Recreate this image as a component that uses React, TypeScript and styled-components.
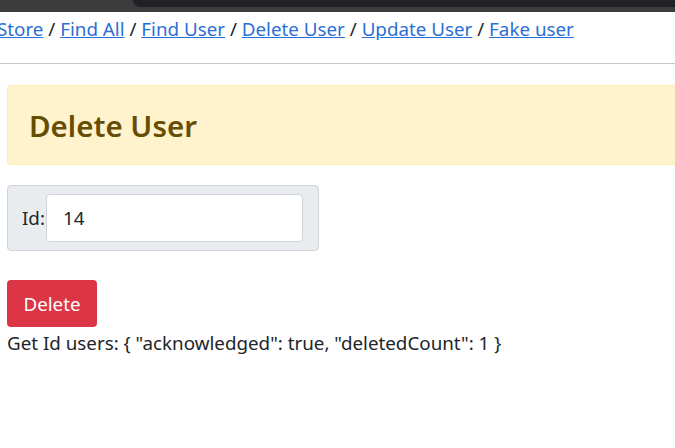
import React from "react";
import styled, { createGlobalStyle } from "styled-components";

const GlobalStyle = createGlobalStyle`
  html, body {
    margin: 0;
    padding: 0;
    background: #fff;
    font-family: "Noto Sans", "Open Sans", sans-serif;
    font-size: 18.8px;
    color: #212529;
  }
  * { box-sizing: border-box; }
`;

const Chrome = styled.div`
  display: flex;
  height: 12px;
  background: #3c3c3c;
`;

const ChromeSide = styled.div`
  width: 133px;
`;

const ChromeTab = styled.div`
  flex: 1;
  height: 7px;
  background: #202124;
  border-bottom-left-radius: 7px;
`;

const Nav = styled.nav`
  padding: 4px 0 0 0;
  margin-left: -3px;
  height: 52px;
  line-height: 26px;
  border-bottom: 1px solid #c8c8c8;
  white-space: nowrap;
  a {
    color: #2a6fd6;
    text-decoration: underline;
  }
`;

const Page = styled.main`
  padding: 21px 0 0 7px;
`;

const Alert = styled.div`
  background: #fff3cd;
  border: 1px solid #ffecb5;
  border-right: none;
  border-radius: 4px 0 0 4px;
  height: 80px;
  padding: 0 21px;
  display: flex;
  align-items: center;
  margin-bottom: 20px;
`;

const Heading = styled.h2`
  margin: 0;
  font-size: 29.5px;
  font-weight: 600;
  color: #664d03;
`;

const FormBox = styled.div`
  width: 312px;
  height: 66px;
  background: #e9ecef;
  border: 1px solid #ced4da;
  border-radius: 4px;
  display: flex;
  align-items: center;
  padding: 0 15px 0 14px;
  margin-bottom: 29px;
`;

const Label = styled.label`
  margin-right: 1px;
`;

const Input = styled.input`
  flex: 1;
  min-width: 0;
  width: 0;
  height: 48px;
  border: 1px solid #ced4da;
  border-radius: 4px;
  background: #fff;
  font: inherit;
  color: #212529;
  padding: 0 16px;
  outline: none;
`;

const Button = styled.button`
  display: block;
  width: 90px;
  height: 47px;
  background: #dc3545;
  color: #fff;
  border: none;
  border-radius: 4px;
  font: inherit;
  padding: 0;
`;

const Result = styled.div`
  margin-top: 3px;
`;

const links = ["Store", "Find All", "Find User", "Delete User", "Update User", "Fake user"];

export default function App() {
  return (
    <>
      <GlobalStyle />
      <Chrome>
        <ChromeSide />
        <ChromeTab />
      </Chrome>
      <Nav>
        {links.map((l, i) => (
          <React.Fragment key={l}>
            {i > 0 && " / "}
            <a href="#">{l}</a>
          </React.Fragment>
        ))}
      </Nav>
      <Page>
        <Alert>
          <Heading>Delete User</Heading>
        </Alert>
        <FormBox>
          <Label htmlFor="id">Id:</Label>
          <Input id="id" defaultValue="14" />
        </FormBox>
        <Button>Delete</Button>
        <Result>Get Id users: {'{ "acknowledged": true, "deletedCount": 1 }'}</Result>
      </Page>
    </>
  );
}
